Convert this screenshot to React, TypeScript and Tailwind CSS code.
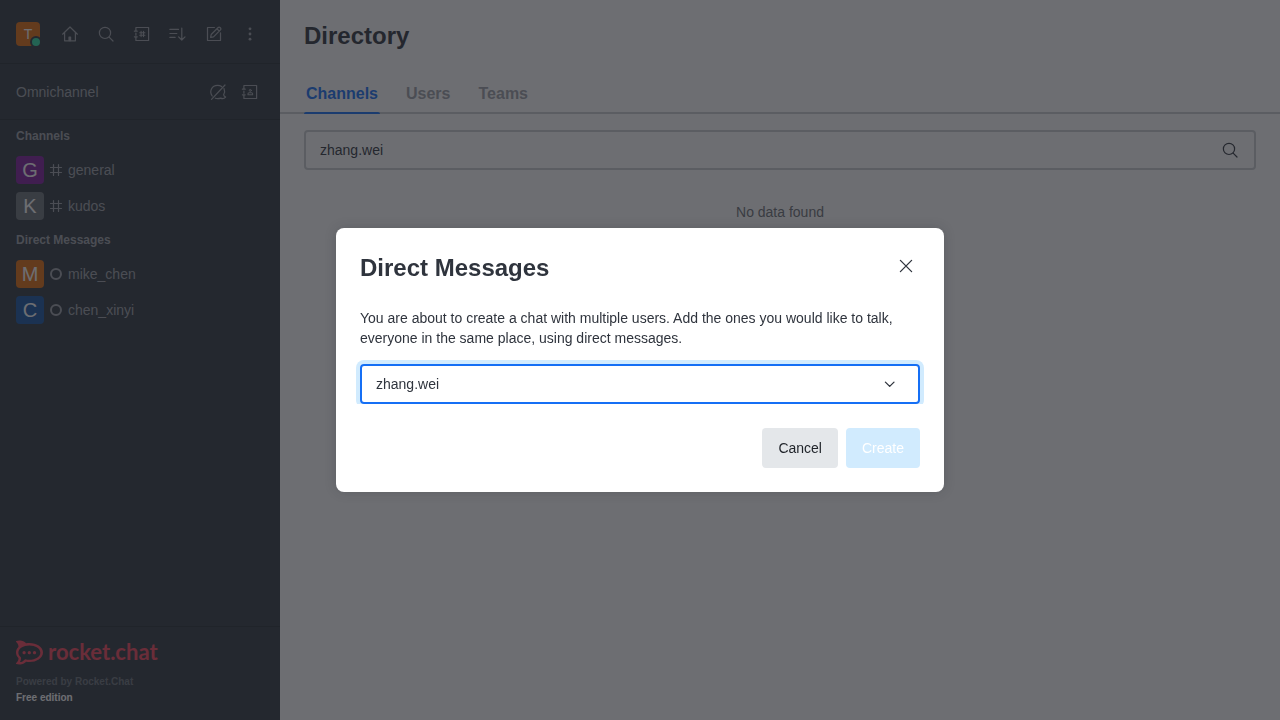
import { useState, type ReactNode } from "react";
import { SiRocketdotchat } from "react-icons/si";

function Icon({ children, width = 1.2 }: { children: ReactNode; width?: number }) {
  return (
    <svg
      className="size-5 shrink-0"
      viewBox="0 0 20 20"
      fill="none"
      stroke="currentColor"
      strokeWidth={width}
      strokeLinecap="round"
      strokeLinejoin="round"
      aria-hidden="true"
    >
      {children}
    </svg>
  );
}

const HomeIcon = () => (
  <Icon>
    <path d="M2.6 10.2 10 3l7.4 7.2M4.6 8.8v8h10.8v-8" />
    <path d="M9 16.6v-3.6h1.6v3.6z" fill="currentColor" />
  </Icon>
);

const SearchIcon = () => (
  <Icon>
    <circle cx="9" cy="8.9" r="5.6" />
    <path d="m13.1 13.1 3.9 3.9" />
  </Icon>
);

const DirectoryIcon = () => (
  <Icon>
    <path d="M3.9 5.2V3.5h12.7v13H3.9v-1.7M3.9 9v2.2M2.4 7.2h2.8M2.4 12.8h2.8M3.9 5.2v2M3.9 12.8v2" />
    <path d="M9.1 7.4v5.2M11.5 7.4v5.2M7.7 8.8h5.2M7.7 11.2h5.2" strokeWidth="1.1" />
  </Icon>
);

const SortIcon = () => (
  <Icon>
    <path d="M1.9 5.4h8.6M1.9 9.5h6.9M1.9 13.4h5.2M13.8 4v12M10.6 12.8l3.2 3.2 3.2-3.2" />
  </Icon>
);

const EditIcon = () => (
  <Icon>
    <path d="M10.4 3.5H3.5v13h13V8.8" />
    <path d="m6.6 13.4.6-2.9 7-7c.5-.5 1.3-.5 1.8 0l.5.5c.5.5.5 1.3 0 1.8l-7 7zM13 4.8l2.2 2.2" />
  </Icon>
);

const KebabIcon = () => (
  <Icon>
    <g fill="currentColor" stroke="none">
      <circle cx="10" cy="4.8" r="1.4" />
      <circle cx="10" cy="10" r="1.4" />
      <circle cx="10" cy="15.2" r="1.4" />
    </g>
  </Icon>
);

const LivechatOffIcon = () => (
  <Icon>
    <path d="M4.2 14C1 9.6 3.6 3.4 9.6 3.4c1.6 0 2.9.4 4 1.2M16 6.6c.9 2 .8 4.1-.4 6.1.2 1 .8 1.8 2 2.4-1.3 1.5-3.2 1.9-4.9 1-1.9.6-3.8.6-5.4.1M3.5 17.3 17 3" />
  </Icon>
);

const ContactsIcon = () => (
  <Icon>
    <path d="M3.9 5.2V3.5h12.7v13H3.9v-1.7M3.9 9v2.2M2.4 7.2h2.8M2.4 12.8h2.8M3.9 5.2v2M3.9 12.8v2" />
    <circle cx="10.3" cy="8.4" r="1" strokeWidth="1" />
    <path d="M8 12.7v-.9c0-.6.5-1.1 1.1-1.1h2.4c.6 0 1.1.5 1.1 1.1v.9z" strokeWidth="1.1" />
  </Icon>
);

const HashIcon = () => (
  <svg className="size-4 shrink-0" viewBox="0 0 16 16" fill="none" stroke="currentColor" strokeWidth="1.2" strokeLinecap="round" aria-hidden="true">
    <path d="M5.5 2.5v11M10.5 2.5v11M2.5 5.5h11M2.5 10.5h11" />
  </svg>
);

const OfflineIcon = () => (
  <svg className="size-4 shrink-0" viewBox="0 0 16 16" fill="none" stroke="currentColor" strokeWidth="2" aria-hidden="true">
    <circle cx="8" cy="8" r="5" />
  </svg>
);

function IconButton({ label, children }: { label: string; children: ReactNode }) {
  return (
    <button type="button" aria-label={label} className="flex size-7 items-center justify-center rounded">
      {children}
    </button>
  );
}

type Room = { name: string; letter: string; color: string; direct?: boolean };

const sections: { title: string; rooms: Room[] }[] = [
  {
    title: "Channels",
    rooms: [
      { name: "general", letter: "G", color: "bg-[#7f1b9f]" },
      { name: "kudos", letter: "K", color: "bg-[#6c727a]" },
    ],
  },
  {
    title: "Direct Messages",
    rooms: [
      { name: "mike_chen", letter: "M", color: "bg-[#e26d0e]", direct: true },
      { name: "chen_xinyi", letter: "C", color: "bg-[#1455a4]", direct: true },
    ],
  },
];

function Sidebar() {
  return (
    <aside className="flex w-70 shrink-0 flex-col bg-[#2f3841] text-sm text-[#9ea2a8]">
      <div className="flex h-16 shrink-0 items-center justify-between border-b border-[#242b31] px-4 pt-1">
        <div className="relative flex size-6 items-center justify-center rounded bg-[#e26d0e] text-white">
          T
          <span className="absolute -right-0.5 -bottom-0.5 size-3 rounded-full border-2 border-[#2f3841] bg-[#2de0a5]" />
        </div>
        <nav aria-label="Toolbar" className="flex gap-2">
          <IconButton label="Home"><HomeIcon /></IconButton>
          <IconButton label="Search"><SearchIcon /></IconButton>
          <IconButton label="Directory"><DirectoryIcon /></IconButton>
          <IconButton label="Display"><SortIcon /></IconButton>
          <IconButton label="Create new"><EditIcon /></IconButton>
          <IconButton label="More options"><KebabIcon /></IconButton>
        </nav>
      </div>
      <div className="flex h-14 shrink-0 items-center justify-between border-b border-[#242b31] px-4">
        <span>Omnichannel</span>
        <div className="flex gap-1">
          <IconButton label="Turn on answer chats"><LivechatOffIcon /></IconButton>
          <IconButton label="Contacts"><ContactsIcon /></IconButton>
        </div>
      </div>
      <div className="flex-1">
        {sections.map((section) => (
          <section key={section.title}>
            <h2 className="px-4 text-xs leading-8 font-bold">{section.title}</h2>
            <ul>
              {section.rooms.map((room) => (
                <li key={room.name}>
                  <a href={`#${room.name}`} className="flex h-9 items-center gap-1 px-4">
                    <span className={`flex size-7 shrink-0 items-center justify-center rounded text-xl text-white ${room.color}`}>
                      {room.letter}
                    </span>
                    {room.direct ? <OfflineIcon /> : <HashIcon />}
                    <span>{room.name}</span>
                  </a>
                </li>
              ))}
            </ul>
          </section>
        ))}
      </div>
      <footer className="border-t border-[#242b31] px-4 pt-[13px] pb-3.5 text-[10px] leading-4 font-bold">
        <a href="#home" className="mb-2.5 flex h-6 items-center gap-[5px] text-[#f5455c]">
          <SiRocketdotchat className="size-[27px] shrink-0" aria-hidden="true" />
          <span className="font-[Lato,sans-serif] text-[22px] leading-6">rocket.chat</span>
        </a>
        <p className="text-[#6c727a]">Powered by Rocket.Chat</p>
        <p className="text-white">Free edition</p>
      </footer>
    </aside>
  );
}

function Directory() {
  const [query, setQuery] = useState("zhang.wei");
  return (
    <main className="min-w-0 flex-1 bg-white text-[#2f343d]">
      <h1 className="px-6 pt-5 text-2xl leading-8 font-bold">Directory</h1>
      <div role="tablist" className="mt-5 flex h-[42px] gap-6 border-b-2 border-[#cbced1] px-6 pt-1 text-base font-bold text-[#9ea2a8]">
        <button
          type="button"
          role="tab"
          aria-selected="true"
          className="relative px-0.5 text-[#156ff5] after:absolute after:inset-x-0 after:-bottom-0.5 after:h-0.5 after:rounded-t-xs after:bg-[#156ff5]"
        >
          Channels
        </button>
        <button type="button" role="tab" aria-selected="false" className="px-0.5">Users</button>
        <button type="button" role="tab" aria-selected="false" className="px-0.5">Teams</button>
      </div>
      <div className="px-6 pt-4">
        <label className="flex h-10 items-center rounded border-2 border-[#cbced1] px-3.5">
          <input
            aria-label="Search channels"
            className="min-w-0 flex-1 text-sm outline-none"
            value={query}
            onChange={(event) => setQuery(event.target.value)}
          />
          <SearchIcon />
        </label>
        <p className="pt-8 text-center text-sm text-[#6c6f75]">No data found</p>
      </div>
    </main>
  );
}

function CreateDirectMessage() {
  const [user, setUser] = useState("zhang.wei");
  return (
    <div className="fixed inset-0 flex items-center justify-center bg-[#1f2126]/65">
      <form
        role="dialog"
        aria-modal="true"
        aria-labelledby="dialog-title"
        className="w-full max-w-[608px] rounded-lg bg-white p-6 text-sm text-[#2f343d] shadow-[0_0_12px_rgba(31,35,41,0.2)]"
        onSubmit={(event) => event.preventDefault()}
      >
        <div className="flex items-start justify-between">
          <h2 id="dialog-title" className="text-2xl leading-8 font-bold">Direct Messages</h2>
          <IconButton label="Close">
            <Icon width={1.3}>
              <path d="m4.4 4.4 11.2 11.2M15.6 4.4 4.4 15.6" />
            </Icon>
          </IconButton>
        </div>
        <label htmlFor="users" className="mt-6 block">
          You are about to create a chat with multiple users. Add the ones you would like to talk, everyone in the same place, using direct messages.
        </label>
        <div className="mt-4 flex h-10 items-center rounded border-2 border-[#156ff5] px-3.5 shadow-[0_0_0_4px_#d1ebfe] [clip-path:inset(-4px_-4px_0)]">
          <input
            id="users"
            className="min-w-0 flex-1 outline-none"
            value={user}
            onChange={(event) => setUser(event.target.value)}
          />
          <span className="flex px-1">
            <Icon width={1.3}>
              <path d="m5.4 8.1 4.3 4.3L14 8.1" />
            </Icon>
          </span>
        </div>
        <div className="mt-6 flex justify-end gap-2">
          <button type="button" className="h-10 rounded bg-[#e4e7ea] px-4 text-[#1f2329]">Cancel</button>
          <button type="submit" disabled className="h-10 rounded bg-[#d1ebfe] px-4 text-white">Create</button>
        </div>
      </form>
    </div>
  );
}

export default function App() {
  return (
    <div className="flex min-h-screen font-['Liberation_Sans',Arial,sans-serif]">
      <Sidebar />
      <Directory />
      <CreateDirectMessage />
    </div>
  );
}
